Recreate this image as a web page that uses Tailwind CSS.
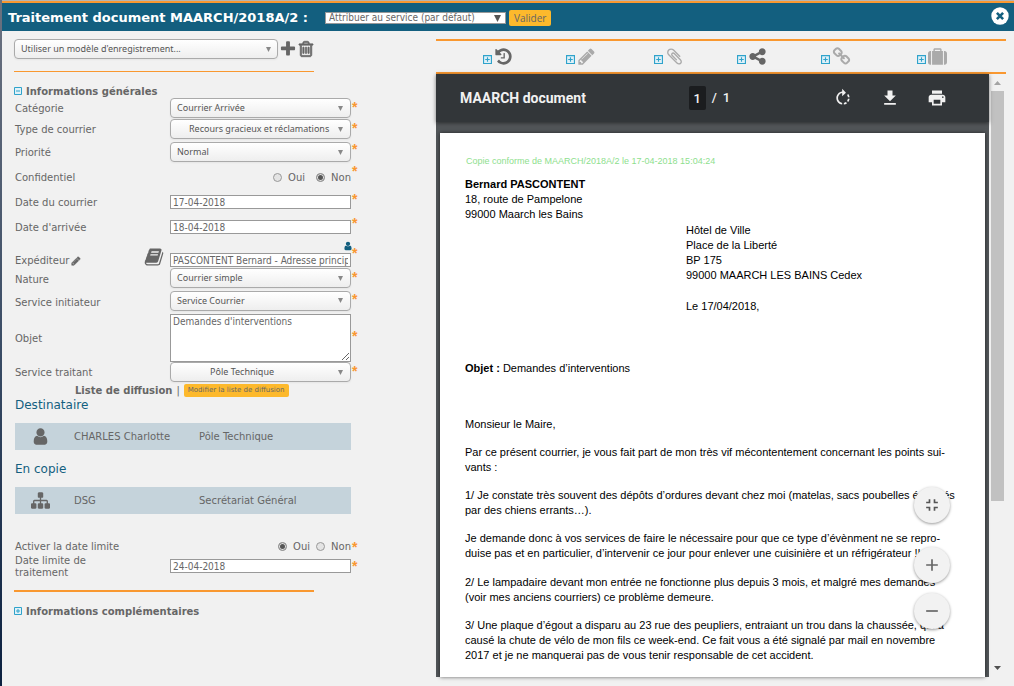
<!DOCTYPE html>
<html lang="fr">
<head>
<meta charset="utf-8">
<title>Traitement document MAARCH/2018A/2</title>
<script src="https://cdn.jsdelivr.net/npm/@tailwindcss/browser@4"></script>
</head>
<body class="min-h-screen bg-[#f1f1f1] font-['DejaVu_Sans',Verdana,sans-serif] text-[10px] text-[#666]">
<svg class="hidden" aria-hidden="true">
  <symbol id="i-history" viewBox="0 0 1792 1792"><path d="M1664 896q0 156-61 298t-164 245-245 164-298 61q-172 0-327-72.5t-264-204.5q-7-10-6.5-22.5t8.5-20.5l137-138q10-9 25-9 16 2 23 12 73 95 179 147t225 52q104 0 198.5-40.5t163.5-109.5 109.5-163.5 40.5-198.5-40.5-198.5-109.5-163.5-163.5-109.5-198.5-40.5q-98 0-188 35.5t-160 101.5l137 138q31 30 14 69-17 40-59 40h-448q-26 0-45-19t-19-45v-448q0-42 40-59 39-17 69 14l130 129q107-101 244.5-156.5t284.5-55.5q156 0 298 61t245 164 164 245 61 298zm-640-288v448q0 14-9 23t-23 9h-320q-14 0-23-9t-9-23v-64q0-14 9-23t23-9h224v-352q0-14 9-23t23-9h64q14 0 23 9t9 23z"/></symbol>
  <symbol id="i-pencil" viewBox="0 0 1792 1792"><path d="M491 1536l91-91-235-235-91 91v107h128v128h107zm523-928q0-22-22-22-10 0-17 7l-542 542q-7 7-7 17 0 22 22 22 10 0 17-7l542-542q7-7 7-17zm-54-192l416 416-832 832h-416v-416zm683 96q0 53-37 90l-166 166-416-416 166-165q36-38 90-38 53 0 91 38l235 234q37 39 37 91z"/></symbol>
  <symbol id="i-clip" viewBox="0 0 1792 1792"><path d="M1596 1385q0 117-79 196t-196 79q-135 0-235-100l-777-776q-113-115-113-271 0-159 110-270t269-111q158 0 273 113l605 606q10 10 10 22 0 16-30.5 46.5t-46.5 30.5q-13 0-23-10l-606-607q-79-77-181-77-106 0-179 75t-73 181q0 105 76 181l776 777q63 63 145 63 64 0 106-42t42-106q0-82-63-145l-581-581q-26-24-60-24-29 0-48 19t-19 48q0 32 25 59l410 410q10 10 10 22 0 16-31 47t-47 31q-12 0-22-10l-410-410q-63-61-63-149 0-82 57-139t139-57q88 0 149 63l581 581q100 98 100 235z"/></symbol>
  <symbol id="i-share" viewBox="0 0 1792 1792"><path d="M1344 1024q133 0 226.5 93.5t93.5 226.5-93.5 226.5-226.5 93.5-226.5-93.5-93.5-226.5q0-12 2-34l-360-180q-92 86-218 86-133 0-226.5-93.5t-93.5-226.5 93.5-226.5 226.5-93.5q126 0 218 86l360-180q-2-22-2-34 0-133 93.5-226.5t226.5-93.5 226.5 93.5 93.5 226.5-93.5 226.5-226.5 93.5q-126 0-218-86l-360 180q2 22 2 34t-2 34l360 180q92-86 218-86z"/></symbol>
  <symbol id="i-link" viewBox="0 0 1792 1792"><path d="M1520 1216q0-40-28-68l-208-208q-28-28-68-28-42 0-72 32 3 3 19 18.5t21.5 21.5 15 19 13 25.5 3.5 27.5q0 40-28 68t-68 28q-15 0-27.5-3.5t-25.5-13-19-15-21.5-21.5-18.5-19q-33 31-33 73 0 40 28 68l206 207q27 27 68 27 40 0 68-26l147-146q28-28 28-67zm-703-705q0-40-28-68l-206-207q-28-28-68-28-39 0-68 27l-147 146q-28 28-28 67 0 40 28 68l208 208q27 27 68 27 42 0 72-31-3-3-19-18.5t-21.5-21.5-15-19-13-25.5-3.5-27.5q0-40 28-68t68-28q15 0 27.5 3.5t25.5 13 19 15 21.5 21.5 18.5 19q33-31 33-73zm895 705q0 120-85 203l-147 146q-83 83-203 83-121 0-204-85l-206-207q-83-83-83-203 0-123 88-209l-88-88q-86 88-208 88-120 0-204-84l-208-208q-84-84-84-204t85-203l147-146q83-83 203-83 121 0 204 85l206 207q83 83 83 203 0 123-88 209l88 88q86-88 208-88 120 0 204 84l208 208q84 84 84 204z"/></symbol>
  <symbol id="i-case" viewBox="0 0 1792 1792"><path d="M640 384h512v-128h-512v128zm-352 0v1280h-64q-92 0-158-66t-66-158v-832q0-92 66-158t158-66h64zm1120 0v1280h-1024v-1280h128v-160q0-40 28-68t68-28h576q40 0 68 28t28 68v160h128zm384 224v832q0 92-66 158t-158 66h-64v-1280h64q92 0 158 66t66 158z"/></symbol>
  <symbol id="i-user" viewBox="0 0 1792 1792"><path d="M1536 1399q0 109-62.5 187t-150.5 78h-854q-88 0-150.5-78t-62.5-187q0-85 8.5-160.5t31.5-152 58.5-131 94-89 134.5-34.5q131 128 313 128t313-128q76 0 134.5 34.5t94 89 58.5 131 31.5 152 8.5 160.5zm-256-887q0 159-112.5 271.5t-271.5 112.5-271.5-112.5-112.5-271.5 112.5-271.5 271.5-112.5 271.5 112.5 112.5 271.5z"/></symbol>
  <symbol id="i-sitemap" viewBox="0 0 1792 1792"><path d="M1792 1248v320q0 40-28 68t-68 28h-320q-40 0-68-28t-28-68v-320q0-40 28-68t68-28h96v-192h-512v192h96q40 0 68 28t28 68v320q0 40-28 68t-68 28h-320q-40 0-68-28t-28-68v-320q0-40 28-68t68-28h96v-192h-512v192h96q40 0 68 28t28 68v320q0 40-28 68t-68 28h-320q-40 0-68-28t-28-68v-320q0-40 28-68t68-28h96v-192q0-52 38-90t90-38h512v-192h-96q-40 0-68-28t-28-68v-320q0-40 28-68t68-28h320q40 0 68 28t28 68v320q0 40-28 68t-68 28h-96v192h512q52 0 90 38t38 90v192h96q40 0 68 28t28 68z"/></symbol>
  <symbol id="i-trash" viewBox="0 0 1792 1792"><path d="M704 736v576q0 14-9 23t-23 9h-64q-14 0-23-9t-9-23v-576q0-14 9-23t23-9h64q14 0 23 9t9 23zm256 0v576q0 14-9 23t-23 9h-64q-14 0-23-9t-9-23v-576q0-14 9-23t23-9h64q14 0 23 9t9 23zm256 0v576q0 14-9 23t-23 9h-64q-14 0-23-9t-9-23v-576q0-14 9-23t23-9h64q14 0 23 9t9 23zm128 724v-948h-896v948q0 22 7 40.5t14.5 27 10.5 8.5h832q3 0 10.5-8.5t14.5-27 7-40.5zm-672-1076h448l-48-117q-7-9-17-11h-317q-10 2-17 11zm928 32v64q0 14-9 23t-23 9h-96v948q0 83-47 143.500t-113 60.500h-832q-66 0-113-58.500t-47-141.500v-952h-96q-14 0-23-9t-9-23v-64q0-14 9-23t23-9h309l70-167q15-37 54-63t79-26h320q40 0 79 26t54 63l70 167h309q14 0 23 9t9 23z"/></symbol>
  <symbol id="i-plus" viewBox="0 0 1792 1792"><path d="M1600 736v192q0 40-28 68t-68 28h-416v416q0 40-28 68t-68 28h-192q-40 0-68-28t-28-68v-416h-416q-40 0-68-28t-28-68v-192q0-40 28-68t68-28h416v-416q0-40 28-68t68-28h192q40 0 68 28t28 68v416h416q40 0 68 28t28 68z"/></symbol>
  <symbol id="i-book" viewBox="0 0 1792 1792"><path d="M1703 478q40 57 18 129l-275 906q-19 64-76.5 107.5t-122.5 43.5h-923q-77 0-148.5-53.5t-99.5-131.5q-24-67-2-127 0-4 3-27t4-37q1-8-3-21.5t-3-19.5q2-11 8-21t16.5-23.5 16.5-23.5q23-38 45-91.5t30-91.5q3-10 .5-30t-.5-28q3-11 17-28t17-23q21-36 42-92t25-90q1-9-2.5-32t.5-28q4-13 22-30.5t22-22.5q19-26 42.5-84.5t27.5-96.5q1-8-3-25.5t-2-26.5q2-8 9-18t18-23 17-21q8-12 16.5-30.5t15-35 16-36 19.5-32 26.5-23.5 36-11.5 47.5 5.5l-1 3q38-9 51-9h761q74 0 114 56t18 130l-274 906q-36 119-71.5 153.5t-128.5 34.5h-869q-27 0-38 15-11 16-1 43 24 70 144 70h923q29 0 56-15.5t35-41.5l300-987q7-22 5-57 38 15 59 43zm-1064 2q-4 13 2 22.5t20 9.5h608q13 0 25.5-9.5t16.5-22.5l21-64q4-13-2-22.5t-20-9.5h-608q-13 0-25.5 9.5t-16.5 22.5zm-83 256q-4 13 2 22.5t20 9.5h608q13 0 25.5-9.5t16.5-22.5l21-64q4-13-2-22.5t-20-9.5h-608q-13 0-25.5 9.5t-16.5 22.5z"/></symbol>
  <symbol id="i-open" viewBox="0 0 8 8"><path fill="#e0f1f8" stroke="#2fa3cb" d="M.5.5h7v7h-7zM2 4h4M4 2v4"/></symbol>
  <symbol id="i-shut" viewBox="0 0 8 8"><path fill="#e0f1f8" stroke="#2fa3cb" d="M.5.5h7v7h-7zM2 4h4"/></symbol>
  <symbol id="i-down" viewBox="0 0 6 6"><path d="M0 0h6L3 6z"/></symbol>
</svg>

<div class="flex min-h-screen bg-linear-to-b from-[#6b7280] via-[#3b4d66] to-[#0c2140] pl-0.5">
<div class="flex min-w-0 grow flex-col bg-[#f1f1f1]">
  <header class="flex h-[31px] items-center border-t border-[#b5b5b5] bg-[#135f7f] pr-[5px] shadow-[inset_0_2px_0_#f99830]">
    <h1 class="w-[323px] pl-1.5 pt-1 text-[13px] font-bold leading-4 text-white"><label for="action">Traitement document MAARCH/2018A/2 :</label></h1>
    <div class="mt-1 grid w-[181px] items-center">
      <select id="action" class="col-start-1 row-start-1 h-3 w-full appearance-none border border-[#999] bg-white pl-[3px] font-['DejaVu_Sans_Condensed','Open_Sans',sans-serif] text-[10px] leading-[10px] text-[#666]"><option>Attribuer au service (par défaut)</option></select>
      <svg class="pointer-events-none col-start-1 row-start-1 mr-[5px] size-[7px] justify-self-end fill-[#555]"><use href="#i-down"/></svg>
    </div>
    <button class="ml-[3px] mt-1 h-4 rounded-xs bg-[#fdb92c] px-[5px] font-['Open_Sans',sans-serif] text-[10px] leading-4">Valider</button>
    <button class="ml-auto" aria-label="Fermer"><svg class="size-[18px]" viewBox="0 0 18 18"><circle cx="9" cy="9" r="8.700" fill="#fff"/><path d="M5.900 5.900l6.200 6.200m0-6.200l-6.200 6.200" stroke="#135f7f" stroke-width="2.600"/></svg></button>
  </header>

  <main class="flex grow items-stretch">
    <section class="w-[434px] shrink-0 pl-3 pt-2">
      <div class="flex items-center">
        <div class="grid w-[264px] items-center">
          <select aria-label="Modèle d'enregistrement" class="col-start-1 row-start-1 h-5 w-full appearance-none rounded border border-[#aaa] bg-linear-to-b from-white to-[#eee] pl-1.5 font-['Noto_Sans',sans-serif] text-[9px] text-[#555] shadow-xs"><option>Utiliser un modèle d'enregistrement...</option></select>
          <svg class="pointer-events-none col-start-1 row-start-1 mr-[7px] size-[5px] justify-self-end fill-[#888]"><use href="#i-down"/></svg>
        </div>
        <button aria-label="Ajouter" class="ml-px"><svg class="size-[18px] fill-[#666]"><use href="#i-plus"/></svg></button>
        <button aria-label="Supprimer"><svg class="size-[18px] fill-[#666] stroke-[#666]" stroke-width="70"><use href="#i-trash"/></svg></button>
      </div>
      <hr class="mt-3 w-[300px] border-t border-[#f99830]">
      <h2 class="mt-3 flex h-[14px] items-center gap-1 text-[10px] font-bold"><svg class="size-2"><use href="#i-shut"/></svg>Informations générales</h2>

      <form class="pl-px">
        <div class="flex h-[21px] items-start"><label for="cat" class="w-[155px] self-center">Catégorie</label>
          <div class="grid w-[181px] items-center"><select id="cat" class="col-start-1 row-start-1 h-5 w-full appearance-none rounded border border-[#aaa] bg-linear-to-b from-white to-[#eee] pl-1.5 font-['Noto_Sans',sans-serif] text-[9px] text-[#555] shadow-xs"><option>Courrier Arrivée</option></select><svg class="pointer-events-none col-start-1 row-start-1 mr-2 size-[5px] justify-self-end fill-[#888]"><use href="#i-down"/></svg></div>
          <span class="pl-px pt-0.5 font-['Liberation_Sans',sans-serif] text-[14px] font-bold leading-[14px] text-[#f99830]">*</span></div>
        <div class="flex h-[21px] items-start"><label for="type" class="w-[155px] self-center">Type de courrier</label>
          <div class="grid w-[181px] items-center"><select id="type" class="col-start-1 row-start-1 h-5 w-full appearance-none rounded border border-[#aaa] bg-linear-to-b from-white to-[#eee] pl-[18px] font-['Noto_Sans',sans-serif] text-[9px] text-[#555] shadow-xs"><option>Recours gracieux et réclamations</option></select><svg class="pointer-events-none col-start-1 row-start-1 mr-2 size-[5px] justify-self-end fill-[#888]"><use href="#i-down"/></svg></div>
          <span class="pl-px pt-0.5 font-['Liberation_Sans',sans-serif] text-[14px] font-bold leading-[14px] text-[#f99830]">*</span></div>
        <div class="flex h-6 items-start"><label for="prio" class="w-[155px] self-center">Priorité</label>
          <div class="grid w-[181px] items-center self-center"><select id="prio" class="col-start-1 row-start-1 h-5 w-full appearance-none rounded border border-[#aaa] bg-linear-to-b from-white to-[#eee] pl-1.5 font-['Noto_Sans',sans-serif] text-[9px] text-[#555] shadow-xs"><option>Normal</option></select><svg class="pointer-events-none col-start-1 row-start-1 mr-2 size-[5px] justify-self-end fill-[#888]"><use href="#i-down"/></svg></div>
          <span class="pl-px pt-0.5 font-['Liberation_Sans',sans-serif] text-[14px] font-bold leading-[14px] text-[#f99830]">*</span></div>
        <fieldset class="flex h-[26px] items-start"><span class="w-[155px] self-center">Confidentiel</span>
          <div class="flex w-[181px] items-center justify-end self-center"><input id="c1" name="conf" type="radio" class="size-[9px] appearance-none rounded-full border border-[#999] bg-[#e4e4e4]"><label for="c1" class="ml-1.5 mr-[11px]">Oui</label><input id="c2" name="conf" type="radio" checked class="size-[9px] appearance-none rounded-full border border-[#999] bg-[#555] shadow-[inset_0_0_0_1px_#e4e4e4]"><label for="c2" class="ml-1.5">Non</label></div>
          <span class="pl-px font-['Liberation_Sans',sans-serif] text-[14px] font-bold leading-[14px] text-[#f99830]">*</span></fieldset>
        <div class="flex h-6 items-start"><label for="d1" class="w-[155px] self-center">Date du courrier</label>
          <input id="d1" value="17-04-2018" class="h-[14px] w-[181px] self-center border border-[#999] bg-white px-0.5 font-['DejaVu_Sans_Condensed','Open_Sans',sans-serif] text-[10px] leading-3 text-[#666]">
          <span class="pl-px pt-0.5 font-['Liberation_Sans',sans-serif] text-[14px] font-bold leading-[14px] text-[#f99830]">*</span></div>
        <div class="flex h-[26px] items-start"><label for="d2" class="w-[155px] self-center">Date d'arrivée</label>
          <input id="d2" value="18-04-2018" class="h-[14px] w-[181px] self-center border border-[#999] bg-white px-0.5 font-['DejaVu_Sans_Condensed','Open_Sans',sans-serif] text-[10px] leading-3 text-[#666]">
          <span class="pl-px pt-0.5 font-['Liberation_Sans',sans-serif] text-[14px] font-bold leading-[14px] text-[#f99830]">*</span></div>
        <div class="flex h-7 items-end"><div class="flex w-[155px] items-end"><label for="exp" class="flex items-center gap-0.5 leading-[14px]">Expéditeur<svg class="size-2.5 fill-[#666] stroke-[#666]" stroke-width="80"><use href="#i-pencil"/></svg></label>
          <svg class="mb-px ml-auto mr-1.5 size-5 fill-[#666]"><use href="#i-book"/></svg></div>
          <div class="mb-px flex w-[181px] flex-col"><svg class="mb-0.5 size-2.5 -mr-0.5 self-end fill-[#135f7f]"><use href="#i-user"/></svg><input id="exp" value="PASCONTENT Bernard - Adresse principale" class="h-[14px] w-full border border-[#999] bg-white px-0.5 font-['DejaVu_Sans_Condensed','Open_Sans',sans-serif] text-[10px] leading-3 text-[#666]"></div>
          <span class="self-start pl-px pt-1.5 font-['Liberation_Sans',sans-serif] text-[14px] font-bold leading-[14px] text-[#f99830]">*</span></div>
        <div class="flex h-[22px] items-start"><label for="nat" class="w-[155px] self-center">Nature</label>
          <div class="grid w-[181px] items-center"><select id="nat" class="col-start-1 row-start-1 h-5 w-full appearance-none rounded border border-[#aaa] bg-linear-to-b from-white to-[#eee] pl-1.5 font-['Noto_Sans',sans-serif] text-[9px] text-[#555] shadow-xs"><option>Courrier simple</option></select><svg class="pointer-events-none col-start-1 row-start-1 mr-2 size-[5px] justify-self-end fill-[#888]"><use href="#i-down"/></svg></div>
          <span class="pl-px pt-0.5 font-['Liberation_Sans',sans-serif] text-[14px] font-bold leading-[14px] text-[#f99830]">*</span></div>
        <div class="flex h-6 items-start"><label for="init" class="w-[155px] self-center">Service initiateur</label>
          <div class="grid w-[181px] items-center"><select id="init" class="col-start-1 row-start-1 mt-px h-5 w-full appearance-none rounded border border-[#aaa] bg-linear-to-b from-white to-[#eee] pl-1.5 font-['Noto_Sans',sans-serif] text-[9px] text-[#555] shadow-xs"><option>Service Courrier</option></select><svg class="pointer-events-none col-start-1 row-start-1 mr-2 size-[5px] justify-self-end fill-[#888]"><use href="#i-down"/></svg></div>
          <span class="pl-px pt-0.5 font-['Liberation_Sans',sans-serif] text-[14px] font-bold leading-[14px] text-[#f99830]">*</span></div>
        <div class="flex items-center"><label for="obj" class="w-[155px]">Objet</label>
          <textarea id="obj" class="h-12 w-[181px] resize border border-[#999] bg-white px-0.5 font-['DejaVu_Sans_Condensed','Open_Sans',sans-serif] text-[10px] leading-[14px] text-[#666]">Demandes d'interventions</textarea>
          <span class="pb-1 pl-px font-['Liberation_Sans',sans-serif] text-[14px] font-bold leading-[14px] text-[#f99830]">*</span></div>
        <div class="flex h-[21px] items-start"><label for="trait" class="w-[155px] self-center">Service traitant</label>
          <div class="grid w-[181px] items-center"><select id="trait" class="col-start-1 row-start-1 h-5 w-full appearance-none rounded border border-[#aaa] bg-linear-to-b from-white to-[#eee] pl-[39px] font-['Noto_Sans',sans-serif] text-[9px] text-[#555] shadow-xs"><option>Pôle Technique</option></select><svg class="pointer-events-none col-start-1 row-start-1 mr-2 size-[5px] justify-self-end fill-[#888]"><use href="#i-down"/></svg></div>
          <span class="pl-px pt-0.5 font-['Liberation_Sans',sans-serif] text-[14px] font-bold leading-[14px] text-[#f99830]">*</span></div>
        <div class="flex h-[14px] items-center gap-1 pl-[60px]"><b>Liste de diffusion</b><span>|</span><button type="button" class="h-[13px] rounded-xs bg-[#fdb92c] px-1 text-[7px] leading-[13px]">Modifier la liste de diffusion</button></div>
        <h3 class="text-xs leading-4 text-[#135f7f]">Destinataire</h3>
        <div class="mt-2.5 flex h-[27px] w-[336px] items-center bg-[#c5d3db]"><svg class="ml-4 size-[19px] fill-[#666]"><use href="#i-user"/></svg><span class="ml-6 w-[125px]">CHARLES Charlotte</span><span>Pôle Technique</span></div>
        <h3 class="mt-[11px] text-xs leading-4 text-[#135f7f]">En copie</h3>
        <div class="mt-2.5 flex h-[27px] w-[336px] items-center bg-[#c5d3db]"><svg class="ml-4 size-[19px] fill-[#666]"><use href="#i-sitemap"/></svg><span class="ml-6 w-[125px]">DSG</span><span>Secrétariat Général</span></div>

        <fieldset class="mt-[25px] flex h-[15px] items-center"><span class="w-[155px]">Activer la date limite</span>
          <div class="flex w-[181px] items-center justify-end"><input id="l1" name="lim" type="radio" checked class="size-[9px] appearance-none rounded-full border border-[#999] bg-[#555] shadow-[inset_0_0_0_1px_#e4e4e4]"><label for="l1" class="mx-1.5">Oui</label><input id="l2" name="lim" type="radio" class="size-[9px] appearance-none rounded-full border border-[#999] bg-[#e4e4e4]"><label for="l2" class="ml-1.5">Non</label></div>
          <span class="pl-px font-['Liberation_Sans',sans-serif] text-[14px] font-bold leading-[14px] text-[#f99830]">*</span></fieldset>
        <div class="flex h-6 items-center"><label for="d3" class="w-[155px] pr-12 pt-0.5 leading-3">Date limite de traitement</label>
          <input id="d3" value="24-04-2018" class="h-[14px] w-[181px] border border-[#999] bg-white px-0.5 font-['DejaVu_Sans_Condensed','Open_Sans',sans-serif] text-[10px] leading-3 text-[#666]">
          <span class="pl-px font-['Liberation_Sans',sans-serif] text-[14px] font-bold leading-[14px] text-[#f99830]">*</span></div>
      </form>
      <hr class="mt-3 w-[300px] border-t-2 border-[#f99830]">
      <h2 class="mt-3 flex h-[14px] items-center gap-1 text-[10px] font-bold"><svg class="size-2"><use href="#i-open"/></svg>Informations complémentaires</h2>
    </section>

    <section class="mb-[9px] mr-2 mt-2 flex min-w-0 grow flex-col">
      <nav class="grid h-[35px] grid-cols-[83fr_88fr_83fr_84fr_96fr_89fr] items-center border-y-2 border-[#f99830] pl-[47px]">
        <a href="#" aria-label="Historique" class="flex items-end gap-0.5"><svg class="mb-0.5 size-[9px]"><use href="#i-open"/></svg><svg class="size-[19px] fill-[#666]"><use href="#i-history"/></svg></a>
        <a href="#" aria-label="Notes" class="flex items-end gap-0.5"><svg class="mb-0.5 size-[9px]"><use href="#i-open"/></svg><svg class="size-[19px] fill-[#aaa]"><use href="#i-pencil"/></svg></a>
        <a href="#" aria-label="Pièces jointes" class="flex items-end gap-0.5"><svg class="mb-0.5 size-[9px]"><use href="#i-open"/></svg><svg class="size-[19px] fill-[#aaa]"><use href="#i-clip"/></svg></a>
        <a href="#" aria-label="Circuit" class="flex items-end gap-0.5"><svg class="mb-0.5 size-[9px]"><use href="#i-open"/></svg><svg class="size-[19px] fill-[#666]"><use href="#i-share"/></svg></a>
        <a href="#" aria-label="Liens" class="flex items-end gap-0.5"><svg class="mb-0.5 size-[9px]"><use href="#i-open"/></svg><svg class="size-[19px] fill-[#aaa]"><use href="#i-link"/></svg></a>
        <a href="#" aria-label="Dossiers" class="flex items-end gap-0.5"><svg class="mb-0.5 size-[9px]"><use href="#i-open"/></svg><svg class="size-[19px] fill-[#aaa]"><use href="#i-case"/></svg></a>
      </nav>
      <div class="flex grow">
        <div class="relative flex min-w-0 grow flex-col bg-[#525659]">
          <div class="relative z-10 grid h-12 grid-cols-3 items-center bg-[#323639] px-6 font-[Roboto,sans-serif] text-[#f1f1f1] shadow-[0_1px_4px_rgba(0,0,0,0.5)]">
            <h2 class="text-sm font-bold">MAARCH document</h2>
            <div class="flex items-center justify-center gap-1.5 pr-1.5 text-[13px] font-medium"><input aria-label="Page" value="1" class="h-6 w-[17px] rounded-xs bg-[#1b1d1f] text-center"><span>/</span><span>1</span></div>
            <div class="flex justify-end gap-[27px] pr-[18px]">
              <button aria-label="Pivoter"><svg class="size-5 fill-[#f1f1f1]" viewBox="0 0 24 24"><path d="M15.55 5.55L11 1v3.07C7.06 4.56 4 7.92 4 12s3.05 7.44 7 7.93v-2.02c-2.84-.48-5-2.94-5-5.91s2.16-5.43 5-5.91V10l4.55-4.45zM19.93 11c-.17-1.39-.72-2.73-1.62-3.89l-1.42 1.42c.54.75.88 1.6 1.02 2.47h2.02zM13 17.9v2.02c1.39-.17 2.74-.71 3.9-1.61l-1.44-1.44c-.75.54-1.59.89-2.46 1.03zm3.89-2.42l1.42 1.41c.9-1.16 1.45-2.5 1.62-3.89h-2.02c-.14.87-.48 1.72-1.02 2.48z"/></svg></button>
              <button aria-label="Télécharger"><svg class="size-5 fill-[#f1f1f1]" viewBox="0 0 24 24"><path d="M19 9h-4V3H9v6H5l7 7 7-7zM5 18v2h14v-2H5z"/></svg></button>
              <button aria-label="Imprimer"><svg class="size-5 fill-[#f1f1f1]" viewBox="0 0 24 24"><path d="M19 8H5c-1.66 0-3 1.34-3 3v6h4v4h12v-4h4v-6c0-1.66-1.34-3-3-3zm-3 11H8v-5h8v5zm3-7c-.55 0-1-.45-1-1s.45-1 1-1 1 .45 1 1-.45 1-1 1zm-1-9H6v4h12V3z"/></svg></button>
            </div>
          </div>
          <article class="mx-1 mt-[11px] grow bg-white pl-[25px] pt-[21px] font-['Liberation_Sans',Arial,sans-serif] text-[11px] leading-[15px] text-black shadow-[0_0_4px_rgba(0,0,0,0.6)]">
            <p class="pl-px text-[9px] text-[#8ee08e]">Copie conforme de MAARCH/2018A/2 le 17-04-2018 15:04:24</p>
            <p class="mt-2"><b>Bernard PASCONTENT</b><br>18, route de Pampelone<br>99000 Maarch les Bains</p>
            <p class="mt-px pl-[221px]">Hôtel de Ville<br>Place de la Liberté<br>BP 175<br>99000 MAARCH LES BAINS Cedex</p>
            <p class="mt-4 pl-[221px]">Le 17/04/2018,</p>
            <p class="mt-[47px]"><b>Objet :</b> Demandes d’interventions</p>
            <p class="mt-[41px]">Monsieur le Maire,</p>
            <p class="mt-[13px]">Par ce présent courrier, je vous fait part de mon très vif mécontentement concernant les points sui-<br>vants :</p>
            <p class="mt-[13px]">1/ Je constate très souvent des dépôts d’ordures devant chez moi (matelas, sacs poubelles éventrés<br>par des chiens errants…).</p>
            <p class="mt-[13px]">Je demande donc à vos services de faire le nécessaire pour que ce type d’évènment ne se repro-<br>duise pas et en particulier, d’intervenir ce jour pour enlever une cuisinière et un réfrigérateur !!</p>
            <p class="mt-[14px]">2/ Le lampadaire devant mon entrée ne fonctionne plus depuis 3 mois, et malgré mes demandes<br>(voir mes anciens courriers) ce problème demeure.</p>
            <p class="mt-[13px]">3/ Une plaque d’égout a disparu au 23 rue des peupliers, entraiant un trou dans la chaussée, qui a<br>causé la chute de vélo de mon fils ce week-end. Ce fait vous a été signalé par mail en novembre<br>2017 et je ne manquerai pas de vous tenir responsable de cet accident.</p>
          </article>
          <div class="absolute bottom-12 right-[39px] flex flex-col">
            <button aria-label="Ajuster" class="grid size-9 place-items-center rounded-full bg-[#f2f2f2] shadow-[0_1px_3px_rgba(0,0,0,0.4)]"><svg class="size-5 fill-[#555]" viewBox="0 0 24 24"><path d="M5 16h3v3h2v-5H5v2zm3-8H5v2h5V5H8v3zm6 11h2v-3h3v-2h-5v5zm2-11V5h-2v5h5V8h-3z"/></svg></button>
            <button aria-label="Zoom avant" class="mt-6 grid size-9 place-items-center rounded-full bg-[#f2f2f2] shadow-[0_1px_3px_rgba(0,0,0,0.4)]"><svg class="size-5 fill-[#666]" viewBox="0 0 24 24"><path d="M19 13h-6v6h-2v-6H5v-2h6V5h2v6h6z"/></svg></button>
            <button aria-label="Zoom arrière" class="mt-2.5 grid size-9 place-items-center rounded-full bg-[#f2f2f2] shadow-[0_1px_3px_rgba(0,0,0,0.4)]"><svg class="size-5 fill-[#666]" viewBox="0 0 24 24"><path d="M19 13H5v-2h14z"/></svg></button>
          </div>
        </div>
        <div class="flex w-[17px] shrink-0 flex-col items-center bg-[#f1f1f1]">
          <svg class="h-[17px] w-[17px] fill-[#a3a3a3]" viewBox="0 0 17 17"><path d="M5 11h7L8.500 7z"/></svg>
          <div class="h-[410px] w-[13px] bg-[#c1c1c1]"></div>
          <svg class="mt-auto h-[17px] w-[17px] fill-[#505050]" viewBox="0 0 17 17"><path d="M5 6h7L8.500 10z"/></svg>
        </div>
      </div>
    </section>
  </main>
</div>
</div>
</body>
</html>
